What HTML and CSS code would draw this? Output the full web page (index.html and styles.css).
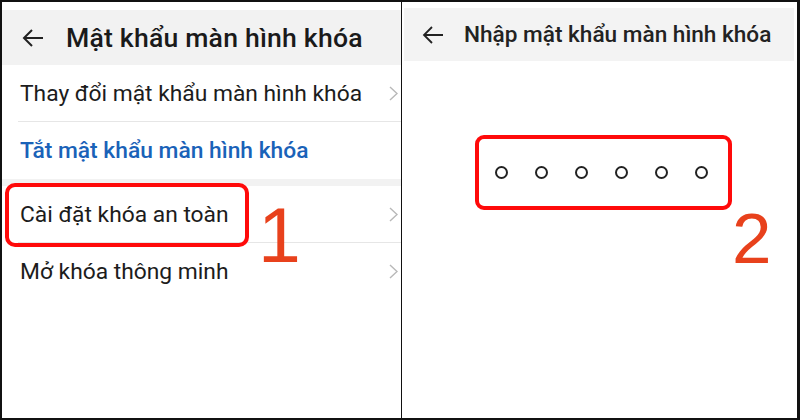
FILE: index.html
```html
<!DOCTYPE html>
<html lang="vi">
<head>
<meta charset="utf-8">
<link rel="stylesheet" href="styles.css">
</head>
<body>
<div class="frame">
  <section class="panel left">
    <header class="bar bar-left">
      <svg class="back" width="22" height="20" viewBox="0 0 22 20"><path d="M21 10H2M10 2L2 10l8 8" fill="none" stroke="#222" stroke-width="2"/></svg>
      <h1 class="title-l">Mật khẩu màn hình khóa</h1>
    </header>
    <div class="row"><span>Thay đổi mật khẩu màn hình khóa</span><svg class="chev" width="9" height="15" viewBox="0 0 9 15"><path d="M1 1l7 6.5L1 14" fill="none" stroke="#b8b8b8" stroke-width="1.4"/></svg></div>
    <div class="row blue last"><span>Tắt mật khẩu màn hình khóa</span></div>
    <div class="gap"></div>
    <div class="row"><span>Cài đặt khóa an toàn</span><svg class="chev" width="9" height="15" viewBox="0 0 9 15"><path d="M1 1l7 6.5L1 14" fill="none" stroke="#b8b8b8" stroke-width="1.4"/></svg></div>
    <div class="row last"><span>Mở khóa thông minh</span><svg class="chev" width="9" height="15" viewBox="0 0 9 15"><path d="M1 1l7 6.5L1 14" fill="none" stroke="#b8b8b8" stroke-width="1.4"/></svg></div>
    <div class="mark mark-1"></div>
    <div class="num num-1">1</div>
  </section>
  <section class="panel right">
    <header class="bar bar-right">
      <svg class="back" width="22" height="20" viewBox="0 0 22 20"><path d="M21 10H2M10 2L2 10l8 8" fill="none" stroke="#222" stroke-width="1.8"/></svg>
      <h1 class="title-r">Nhập mật khẩu màn hình khóa</h1>
    </header>
    <div class="pin">
      <span class="dot"></span><span class="dot"></span><span class="dot"></span><span class="dot"></span><span class="dot"></span><span class="dot"></span>
    </div>
    <div class="num num-2">2</div>
  </section>
</div>
</body>
</html>
```
FILE: styles.css
```css
* { box-sizing: border-box; margin: 0; padding: 0; }
html, body { width: 800px; height: 420px; background: #fff; overflow: hidden; }
body { font-family: Roboto, "Noto Sans", sans-serif; color: #1c1c1c; }
.frame {
  width: 800px; height: 420px;
  border: 2px solid #111; border-right-width: 3px;
  display: flex;
}
.panel { position: relative; height: 100%; background: #fff; }
.left { width: 400px; padding-top: 8px; border-right: 1px solid #111; }
.right { flex: 1; padding: 6px 3px 0 2px; }
.bar { display: flex; align-items: center; background: #f2f2f2; }
.bar-left { height: 55px; padding-left: 20px; }
.bar-right { height: 53px; padding-left: 18px; background: #f3f3f3; }
.back { flex: none; }
.title-l { font-size: 26.6px; font-weight: 500; margin-left: 22px; color: #1a1a1a; letter-spacing: 0.2px; }
.title-r { font-size: 22.6px; font-weight: 500; margin-left: 20px; color: #222; }
.row {
  height: 57px; margin-left: 16px; padding-left: 2px; padding-right: 3px;
  display: flex; align-items: center; justify-content: space-between;
  font-size: 22.8px; color: #1c1c1c;
  border-bottom: 1px solid #e6e6e6;
}
.row.last { border-bottom: none; }
.blue { color: #1a62b8; font-weight: 500; }
.gap { height: 7px; background: #f2f2f2; }
.chev { flex: none; }
.mark {
  position: absolute; border: 4px solid #ff0a0a; border-radius: 10px;
}
.mark-1 { left: 3px; top: 181px; width: 244px; height: 64px; }
.num {
  position: absolute; font-family: "Liberation Sans", Arial, sans-serif;
  color: #e8411c; line-height: 1;
}
.num-1 { left: 256px; top: 195px; font-size: 77px; }
.num-2 { left: 330px; top: 201px; font-size: 71px; }
.pin {
  margin: 74px 0 0 71px; width: 257px; height: 75px;
  border: 4px solid #ff0a0a; border-radius: 9px;
  display: flex; align-items: center; gap: 27px; padding-left: 16px;
}
.dot { width: 13px; height: 13px; border: 2px solid #222; border-radius: 50%; flex: none; }
```
